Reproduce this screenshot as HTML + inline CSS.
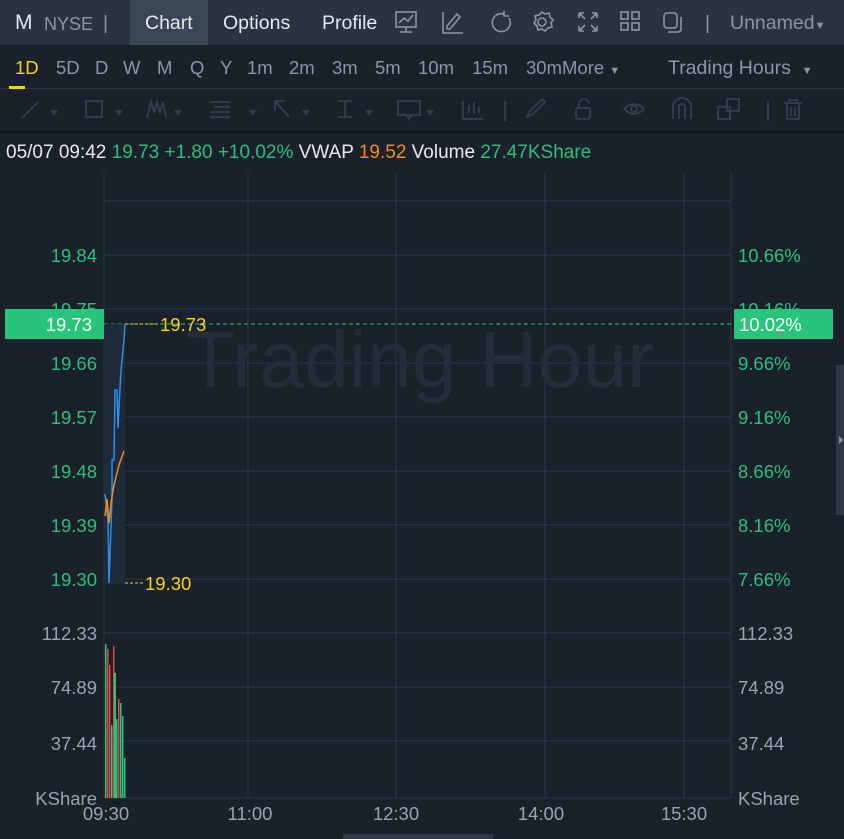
<!DOCTYPE html>
<html><head><meta charset="utf-8"><style>
body{margin:0;width:844px;height:839px;background:#1b212b;overflow:hidden;font-family:"Liberation Sans",sans-serif;position:relative}
.top{position:absolute;left:0;top:0;width:844px;height:45px;background:#2a3341}
.t{position:absolute;color:#e6e9ee;font-size:19.5px;top:12px}
.row2{position:absolute;top:45px;left:0;width:844px;height:43px;background:#1b212b;border-bottom:1px solid #2c3440}
.p{position:absolute;top:57px;color:#8c96a3;font-size:18.5px}
.tb{position:absolute;top:89px;left:0;width:844px;height:42px;border-bottom:2px solid #10151b}
.info{position:absolute;top:142px;left:6px;font-size:19px;color:#e6e9ee;white-space:nowrap}
</style></head><body>
<div class="top"></div>
<div style="position:absolute;left:130px;top:0;width:78px;height:45px;background:#3a4556"></div>
<div class="t" style="left:15px;font-size:21px;top:11px">M</div>
<div class="t" style="left:44px;color:#8c96a3;font-size:18px;top:14px">NYSE</div>
<div class="t" style="left:103px;color:#8c96a3">|</div>
<div class="t" style="left:145px">Chart</div>
<div class="t" style="left:223px">Options</div>
<div class="t" style="left:322px">Profile</div>
<svg style="position:absolute;left:390px;top:8px" width="340" height="30" fill="none" stroke="#8c96a3" stroke-width="1.6">
<rect x="6" y="4" width="20" height="15"/><path d="M16 19v5M10 24h12M9 15l5-5 4 3 5-6"/>
<path d="M53 4v21h20M57 18l10-12 3 3-10 12h-3z"/>
<path d="M114 6a9 9 0 1 0 5 4M114 3v5h5"/>
<circle cx="152" cy="14" r="4"/><path d="M152 4l3 2 4-1 1 4 3 3-2 3 1 4-4 1-3 3-3-2-4 1-1-4-3-3 2-3-1-4 4-1z"/>
<path d="M189 5l6 6M189 5h5M189 5v5M207 5l-6 6M207 5h-5M207 5v5M189 23l6-6M189 23h5M189 23v-5M207 23l-6-6M207 23h-5M207 23v-5"/>
<rect x="231" y="4" width="7" height="7"/><rect x="242" y="4" width="7" height="7"/><rect x="231" y="15" width="7" height="7"/><rect x="242" y="15" width="7" height="7"/>
<rect x="274" y="5" width="13" height="15" rx="3"/><path d="M278 24h10a3 3 0 0 0 3-3V9"/>
</svg>
<div class="t" style="left:705px;color:#8c96a3">|</div>
<div class="t" style="left:730px;color:#8c96a3">Unnamed<span style="font-size:11px">▼</span></div>
<div class="row2"></div>
<div class="p" style="left:15px;color:#f3d21b">1D</div>
<div style="position:absolute;left:9px;top:86px;width:16px;height:3px;background:#f3d21b"></div>
<div class="p" style="left:56px">5D</div><div class="p" style="left:95px">D</div><div class="p" style="left:123px">W</div><div class="p" style="left:157px">M</div><div class="p" style="left:190px">Q</div><div class="p" style="left:220px">Y</div><div class="p" style="left:247px">1m</div><div class="p" style="left:289px">2m</div><div class="p" style="left:332px">3m</div><div class="p" style="left:375px">5m</div><div class="p" style="left:418px">10m</div><div class="p" style="left:472px">15m</div><div class="p" style="left:526px">30mMore <span style="font-size:11px">▼</span></div>
<div class="p" style="left:668px;font-size:19.5px">Trading Hours &nbsp;<span style="font-size:11px">▼</span></div>
<div class="tb"></div>
<svg style="position:absolute;left:0;top:89px" width="844" height="42" fill="none" stroke="#363f4b" stroke-width="1.8">
<path d="M22 29l16-16"/><path d="M52 22l4 0-2 3z" fill="#363f4b"/>
<rect x="86" y="12" width="16" height="16"/><path d="M117 22h4l-2 3z" fill="#363f4b"/>
<path d="M147 29l4-16 3 10 3-10 3 10 3-10 3 16"/><path d="M176 22h4l-2 3z" fill="#363f4b"/>
<path d="M210 13h20M214 18h16M210 23h20M210 28h20"/><path d="M251 22h4l-2 3z" fill="#363f4b"/>
<path d="M275 12v10M275 12h10M275 12l14 16"/><path d="M304 22h4l-2 3z" fill="#363f4b"/>
<path d="M338 12h14M338 28h14M345 12v16"/><path d="M367 22h4l-2 3z" fill="#363f4b"/>
<rect x="398" y="12" width="22" height="14"/><path d="M406 26l3 4 3-4"/><path d="M428 22h4l-2 3z" fill="#363f4b"/>
<path d="M463 12v18h20M469 16v8M474 13v12M479 18v6"/>
<path d="M505 12v20"/>
<path d="M527 28l3-6 12-12 3 3-12 12z"/>
<rect x="576" y="19" width="14" height="11" rx="2"/><path d="M579 19v-4a5 5 0 0 1 10 0"/>
<path d="M624 20q10-10 20 0q-10 10-20 0z"/><circle cx="634" cy="20" r="3"/>
<path d="M673 30V18a9 9 0 0 1 18 0v12M679 30V18a3 3 0 0 1 6 0v12"/>
<rect x="718" y="18" width="12" height="12"/><rect x="727" y="10" width="12" height="12"/>
<path d="M768 12v20"/>
<path d="M784 14h18M789 14v-3h8v3M787 14v16h12V14M791 18v9M795 18v9"/>
</svg>
<div class="info">05/07 09:42 <span style="color:#2bc07a">19.73 +1.80 +10.02%</span> VWAP <span style="color:#f08a24">19.52</span> Volume <span style="color:#2bc07a">27.47KShare</span></div>
<svg style="position:absolute;left:0;top:0" width="844" height="839" font-family="Liberation Sans, sans-serif">
<g stroke="#2e3744" stroke-width="1">
<path d="M104 172V798M731 172V798M248 172V798M396 172V798M545 172V798M684 172V798"/>
<path d="M104 201H731M104 255H731M104 309H731M104 363H731M104 417H731M104 471H731M104 525H731M104 579H731M104 633H731M104 687H731M104 741H731M104 798H731"/>
</g>
<text x="420" y="387" text-anchor="middle" font-size="80" fill="#252d38" textLength="468">Trading Hour</text>
<g fill="#2bc07a" font-size="18.5" text-anchor="end">
<text x="97" y="262">19.84</text><text x="97" y="316">19.75</text><text x="97" y="370">19.66</text><text x="97" y="424">19.57</text><text x="97" y="478">19.48</text><text x="97" y="532">19.39</text><text x="97" y="586">19.30</text>
</g>
<g fill="#2bc07a" font-size="18.5">
<text x="738" y="262">10.66%</text><text x="738" y="316">10.16%</text><text x="738" y="370">9.66%</text><text x="738" y="424">9.16%</text><text x="738" y="478">8.66%</text><text x="738" y="532">8.16%</text><text x="738" y="586">7.66%</text>
</g>
<g fill="#9aa3ae" font-size="18.5">
<text x="97" y="640" text-anchor="end">112.33</text><text x="97" y="694" text-anchor="end">74.89</text><text x="97" y="750" text-anchor="end">37.44</text><text x="97" y="805" text-anchor="end">KShare</text>
<text x="738" y="640">112.33</text><text x="738" y="694">74.89</text><text x="738" y="750">37.44</text><text x="738" y="805">KShare</text>
<text x="106" y="820" text-anchor="middle">09:30</text><text x="250" y="820" text-anchor="middle">11:00</text><text x="396" y="820" text-anchor="middle">12:30</text><text x="541" y="820" text-anchor="middle">14:00</text><text x="684" y="820" text-anchor="middle">15:30</text>
</g>
<rect x="5" y="309" width="99" height="30" fill="#27c47a"/>
<text x="92" y="331" text-anchor="end" fill="#fff" font-size="18.5">19.73</text>
<rect x="734" y="309" width="99" height="30" fill="#27c47a"/>
<text x="739" y="331" fill="#fff" font-size="18.5">10.02%</text>
<path d="M104 324H731" stroke="#27c47a" stroke-dasharray="4 3"/>
<path d="M125 324H160" stroke="#f3d21b" stroke-dasharray="3 2"/>
<text x="160" y="331" fill="#f3d21b" font-size="18.5">19.73</text>
<path d="M110 583H145" stroke="#f3d21b" stroke-dasharray="3 2"/>
<text x="145" y="590" fill="#f3d21b" font-size="18.5">19.30</text>
<rect x="105" y="324" width="20" height="260" fill="#1e2b3a"/>
<path d="M105 494L108 520 109 583 112 500 112 460 114 460 115 390 117 390 118 428 120 388 121 370 124 340 125 324" stroke="#2f8fe8" stroke-width="1.5" fill="none"/>
<path d="M105 516L107 499 109 523 111 503 114 485 119 465 124 451" stroke="#f08a24" stroke-width="1.5" fill="none"/>
<g>
<rect x="105" y="644" width="1.5" height="154" fill="#27c47a"/><rect x="107" y="649" width="1.5" height="149" fill="#e04848"/>
<rect x="109" y="665" width="1.5" height="133" fill="#e04848"/><rect x="111" y="725" width="1.5" height="73" fill="#27c47a"/>
<rect x="113" y="646" width="1.5" height="152" fill="#e04848"/><rect x="114" y="673" width="2" height="125" fill="#27c47a"/>
<rect x="116" y="719" width="1.5" height="79" fill="#27c47a"/><rect x="118" y="699" width="1.5" height="99" fill="#e04848"/>
<rect x="120" y="703" width="1.5" height="95" fill="#27c47a"/><rect x="122" y="716" width="1.5" height="82" fill="#27c47a"/>
<rect x="124" y="758" width="1.5" height="40" fill="#27c47a"/>
</g>
<rect x="836" y="365" width="8" height="150" fill="#2f3845"/>
<path d="M839 436l4 4-4 4z" fill="#8c96a3"/>
<rect x="343" y="834" width="150" height="5" fill="#2f3845"/>
</svg>
</body></html>
